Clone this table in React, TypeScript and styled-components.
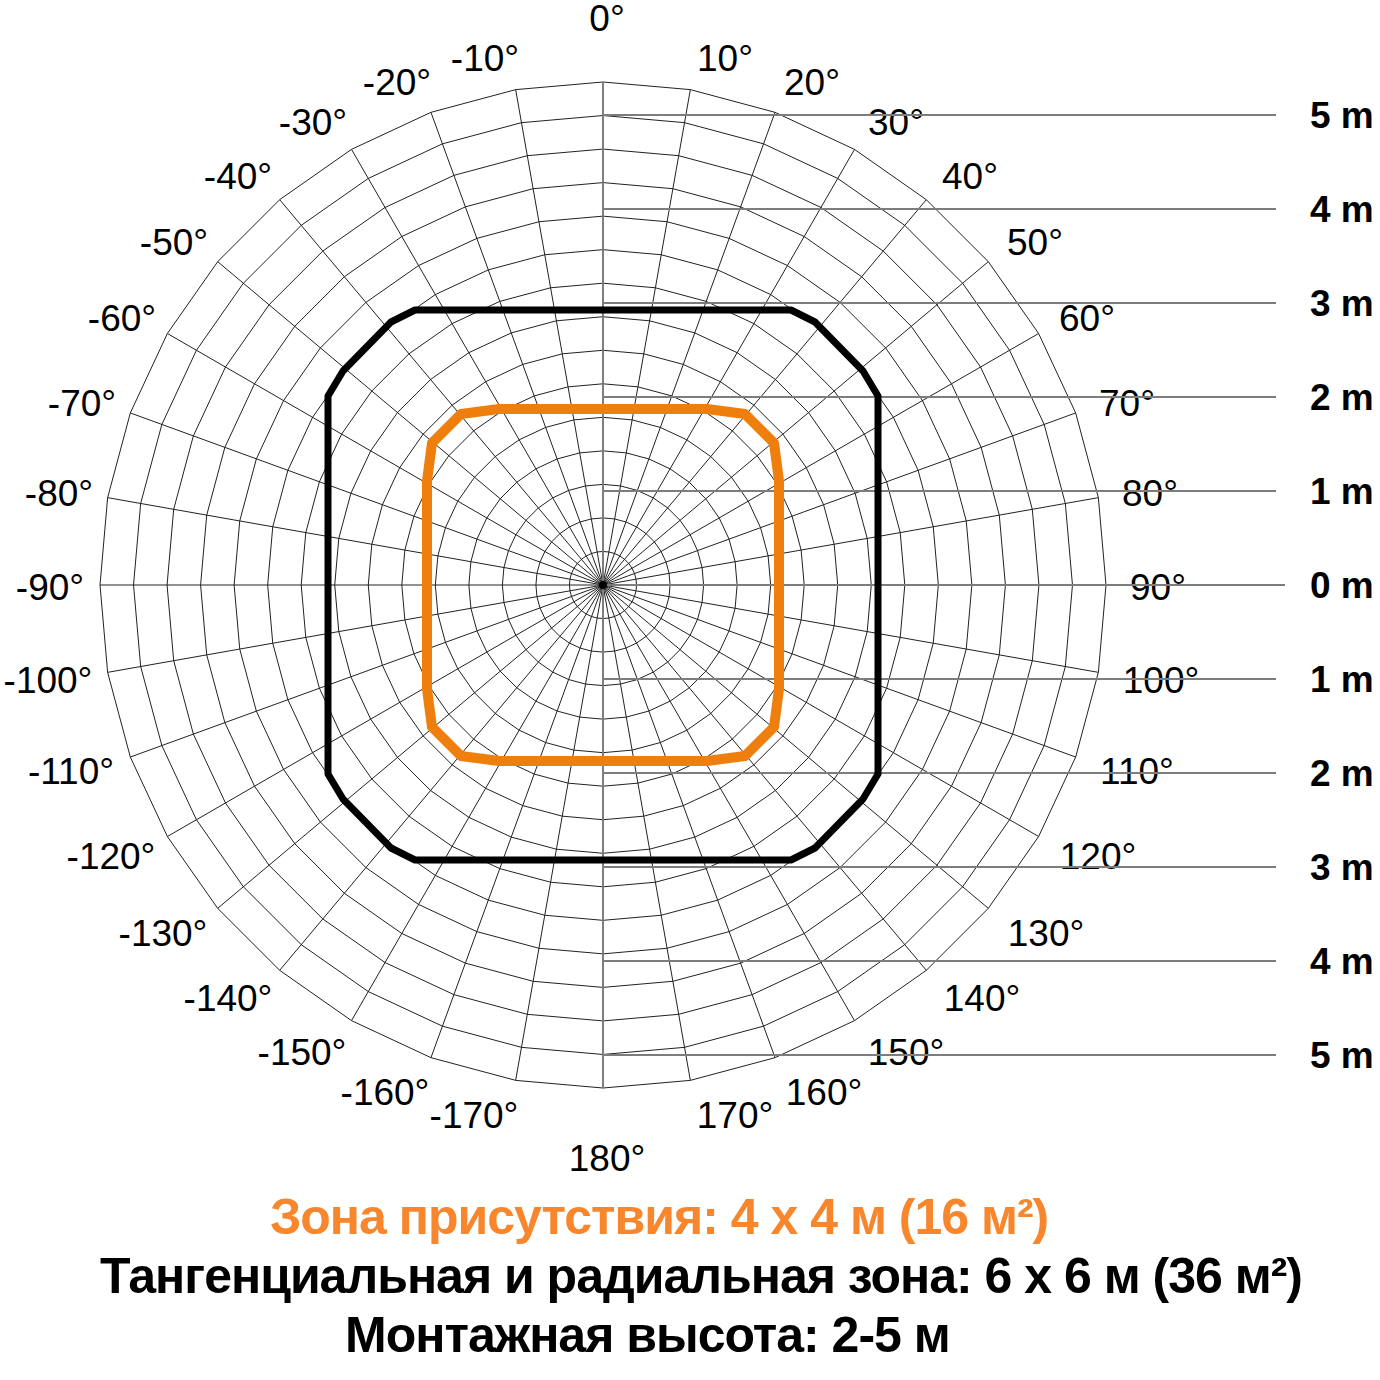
import React from 'react'
import styled, { createGlobalStyle, css } from 'styled-components'

const GlobalStyle = createGlobalStyle`
    html, body {
        margin: 0;
        padding: 0;
        background: #fff;
    }
    body {
        font-family: "Liberation Sans", Arial, sans-serif;
    }
`

const CX = 603
const CY = 585
const R = 503
const RINGS = 15
const STEP = 94

const Page = styled.div`
    width: 1380px;
    background: #fff;
`

const Chart = styled.svg`
    display: block;
    width: 1380px;
    height: 1180px;
`

const GridPath = styled.path`
    fill: none;
    stroke: #222;
    stroke-width: 1;
`

const AxisLine = styled.line`
    stroke: #7d7d7d;
    stroke-width: 1.8;
`

const CenterDot = styled.circle`
    fill: #000;
`

type ZoneProps = {
    $inner?: boolean
}

const Zone = styled.path<ZoneProps>`
    fill: none;
    stroke: #000;
    stroke-width: 7;
    stroke-linejoin: round;

    ${props => props.$inner && css`
        stroke: #ef7f0c;
        stroke-width: 10;
    `}
`

const AngleLabel = styled.text`
    font-family: "Liberation Sans", Arial, sans-serif;
    font-size: 37px;
    fill: #000;
    text-anchor: middle;
`

const MeterLabel = styled.text`
    font-family: "Liberation Sans", Arial, sans-serif;
    font-weight: bold;
    font-size: 37px;
    fill: #000;
`

const Captions = styled.div`
    padding-top: 8px;
    display: flex;
    flex-direction: column;
`

type LineProps = {
    $indent: number
    $accent?: boolean
}

const CaptionLine = styled.div<LineProps>`
    padding-left: ${props => props.$indent}px;
    font-family: "Liberation Sans", Arial, sans-serif;
    font-weight: bold;
    font-size: 50px;
    letter-spacing: -1px;
    line-height: 59px;
    color: #000;
    white-space: nowrap;

    ${props => props.$accent && css`
        color: #f7862c;
    `}
`

// label centres read off the source drawing
const angles: [string, number, number][] = [
    ['0°', 607, 18], ['10°', 725, 58], ['20°', 812, 82], ['30°', 896, 122],
    ['40°', 970, 176], ['50°', 1035, 242], ['60°', 1087, 318], ['70°', 1127, 403],
    ['80°', 1150, 493], ['90°', 1158, 587], ['100°', 1161, 680], ['110°', 1137, 771],
    ['120°', 1098, 856], ['130°', 1046, 933], ['140°', 982, 998], ['150°', 906, 1052],
    ['160°', 824, 1092], ['170°', 735, 1115], ['180°', 607, 1158],
    ['-10°', 485, 58], ['-20°', 397, 82], ['-30°', 313, 122], ['-40°', 238, 176],
    ['-50°', 174, 242], ['-60°', 122, 318], ['-70°', 82, 403], ['-80°', 59, 493],
    ['-90°', 50, 587], ['-100°', 48, 680], ['-110°', 71, 771], ['-120°', 111, 856],
    ['-130°', 163, 933], ['-140°', 228, 998], ['-150°', 302, 1052], ['-160°', 385, 1092],
    ['-170°', 474, 1115],
]

const meters = [5, 4, 3, 2, 1, 0, -1, -2, -3, -4, -5]

const point = (r: number, deg: number) => {
    const a = (deg * Math.PI) / 180
    return `${(CX + r * Math.sin(a)).toFixed(2)},${(CY - r * Math.cos(a)).toFixed(2)}`
}

const ringPath = (r: number) => {
    const pts = []
    for (let d = 0; d < 360; d += 10) pts.push(point(r, d))
    return `M${pts.join('L')}Z`
}

const spokesPath = () => {
    let d = ''
    for (let a = 0; a < 360; a += 10) d += `M${CX},${CY}L${point(R, a)}`
    return d
}

// one quadrant of each zone outline, mirrored into the other three
const zonePath = (q: [number, number][]) => {
    const tr = q
    const br = [...q].reverse().map(([x, y]) => [x, -y])
    const bl = q.map(([x, y]) => [-x, -y])
    const tl = [...q].reverse().map(([x, y]) => [-x, y])
    const all = [...tl, ...tr, ...br, ...bl]
    return 'M' + all.map(([x, y]) => `${CX + x},${CY + y}`).join('L') + 'Z'
}

const outerZone = zonePath([[188, -275], [212, -263], [260, -214], [275, -189]])
const innerZone = zonePath([[104, -176], [142, -171], [171, -142], [176, -104]])

const PolarChart = () => {
    const rings = []
    for (let i = 1; i <= RINGS; i++) rings.push(ringPath((R * i) / RINGS))

    return (
        <Chart viewBox="0 0 1380 1180">
            {angles.map(([t, x, y]) => (
                <AngleLabel key={t} x={x} y={y + 13}>{t}</AngleLabel>
            ))}
            <GridPath d={rings.join('')} />
            <GridPath d={spokesPath()} />
            <AxisLine x1={CX} y1={CY - R} x2={CX} y2={CY + R} />
            {meters.map(m => {
                const y = CY - m * STEP
                return (
                    <g key={m}>
                        <AxisLine x1={CX} y1={y} x2={m === 0 ? 1285 : 1276} y2={y} />
                        <MeterLabel x={1310} y={y + 13}>{`${Math.abs(m)} m`}</MeterLabel>
                    </g>
                )
            })}
            <CenterDot cx={CX} cy={CY} r={4} />
            <Zone d={outerZone} />
            <Zone $inner d={innerZone} />
        </Chart>
    )
}

const App = () => {
    return (
        <Page>
            <GlobalStyle />
            <PolarChart />
            <Captions>
                <CaptionLine $accent $indent={270}>Зона присутствия: 4 x 4 м (16 м²)</CaptionLine>
                <CaptionLine $indent={100}>Тангенциальная и радиальная зона: 6 x 6 м (36 м²)</CaptionLine>
                <CaptionLine $indent={345}>Монтажная высота: 2-5 м</CaptionLine>
            </Captions>
        </Page>
    )
}

export default App
